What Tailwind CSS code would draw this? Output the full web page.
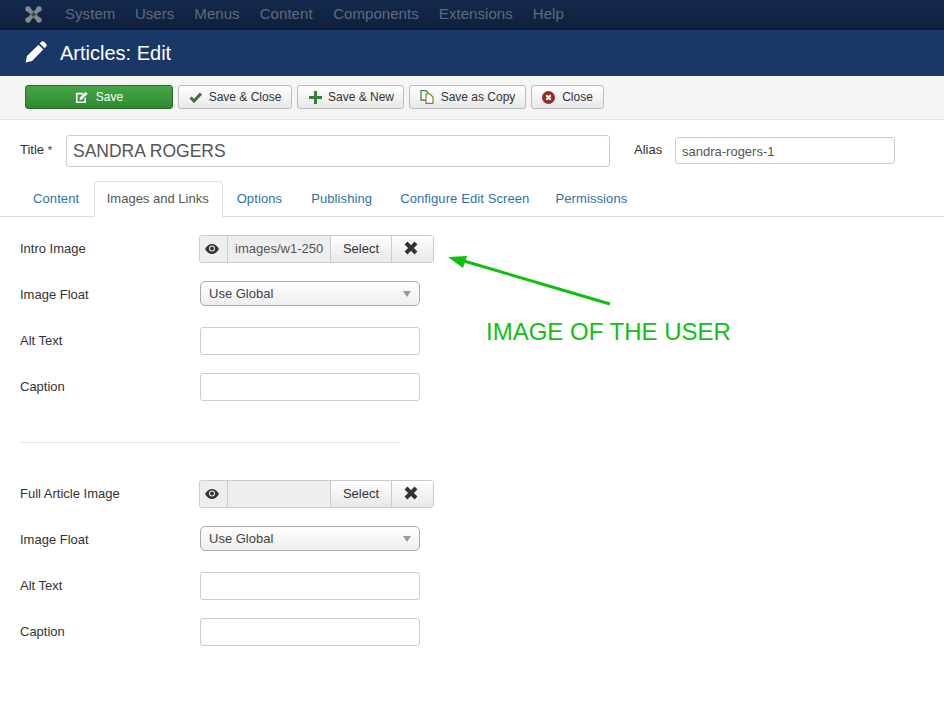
<!DOCTYPE html>
<html>
<head>
<meta charset="utf-8">
<script src="https://cdn.jsdelivr.net/npm/@tailwindcss/browser@4"></script>
</head>
<body class="relative w-[944px] h-[722px] overflow-hidden bg-white font-['Liberation_Sans',Arial,sans-serif] text-[13px] text-[#333]">

<!-- top nav -->
<nav class="h-[30px] bg-gradient-to-b from-[#13294d] to-[#10203b] border-b border-[#0c1a30] flex items-center pl-[25px] text-[15px] text-[#5d6b80] tracking-[0.06px]">
    <svg class="w-[17px] h-[17px] mr-[23px]" viewBox="0 0 18 18" fill="#84898f">
        <path d="M3.500 3.500L14.500 14.500M14.500 3.500L3.500 14.500" stroke="#84898f" stroke-width="4.500" fill="none"/>
        <circle cx="3.200" cy="3.200" r="2.900"/><circle cx="14.800" cy="3.200" r="2.900"/>
        <circle cx="3.200" cy="14.800" r="2.900"/><circle cx="14.800" cy="14.800" r="2.900"/>
        <path d="M9 6.200L11.800 9 9 11.800 6.200 9z" fill="#3c4a5e"/>
    </svg>
    <div class="flex gap-[20px]">
        <span>System</span><span class="-ml-[0.500px]">Users</span><span>Menus</span><span>Content</span><span class="ml-[0.500px]">Components</span><span>Extensions</span><span>Help</span>
    </div>
</nav>

<!-- page title -->
<header class="h-[46px] bg-[#1a3867] flex items-center pl-[25px] text-white">
    <svg class="w-[22px] h-[22px] mr-[13px] -mt-[3px]" viewBox="0 0 22 22" fill="#fff">
        <path d="M16.500.8a2 2 0 0 1 2.500 0l2.200 2.200a2 2 0 0 1 0 2.500L19.500 7.300 14.700 2.500z"/>
        <path d="M13.500 3.700l4.800 4.800L7 20 .6 21.400 2 15z"/>
    </svg>
    <h1 class="text-[20px] leading-none">Articles: Edit</h1>
</header>

<!-- toolbar -->
<div class="h-[44px] bg-[#f5f5f5] border-b border-[#e3e3e3] flex items-start pt-[9px] pl-[25px] gap-[5px] text-[12px]">
    <button class="w-[148px] h-[24px] rounded-[3px] border border-[#2b6a2b] bg-gradient-to-b from-[#46a546] to-[#2f8a2f] text-white flex items-center justify-center gap-[8px]">
        <svg class="w-[13px] h-[13px]" viewBox="0 0 14 14" fill="#fff">
            <path d="M1 2h8.500L8 3.800H2.800v7.400H10V8.500l1.800-1.800V13H1z"/>
            <path d="M11.500 .8L13.700 3 7.500 9.200 4.800 9.800 5.300 7z"/>
        </svg>
        Save
    </button>
    <button class="w-[114px] h-[24px] rounded-[3px] border border-[#bbb] bg-gradient-to-b from-white to-[#e8e8e8] flex items-center justify-center gap-[7px]">
        <svg class="w-[13px] h-[11px]" viewBox="0 0 13 11" fill="none" stroke="#3c763d" stroke-width="3"><path d="M1.500 5.500l3.500 3.500 7-7.500"/></svg>
        Save &amp; Close
    </button>
    <button class="w-[107px] h-[24px] pl-[2px] rounded-[3px] border border-[#bbb] bg-gradient-to-b from-white to-[#e8e8e8] flex items-center justify-center gap-[6px]">
        <svg class="w-[13px] h-[13px]" viewBox="0 0 13 13" fill="#378137"><path d="M5 0h3v5h5v3H8v5H5V8H0V5h5z"/></svg>
        Save &amp; New
    </button>
    <button class="w-[117px] h-[24px] rounded-[3px] border border-[#bbb] bg-gradient-to-b from-white to-[#e8e8e8] flex items-center justify-center gap-[7px]">
        <svg class="w-[14px] h-[14px]" viewBox="0 0 14 14" fill="#fff" stroke-width="1.200">
            <path d="M1 .6h5l2 2v7.500H1z" stroke="#378137"/>
            <path d="M6 4h4l3 3v6.400H6z" stroke="#8a7a2e"/>
        </svg>
        Save as Copy
    </button>
    <button class="w-[73px] h-[24px] rounded-[3px] border border-[#bbb] bg-gradient-to-b from-white to-[#e8e8e8] flex items-center justify-center gap-[7px]">
        <svg class="w-[13px] h-[13px]" viewBox="0 0 13 13">
            <circle cx="6.500" cy="6.500" r="6.500" fill="#962d22"/>
            <path d="M4.300 4.300l4.400 4.400M8.700 4.300l-4.400 4.400" stroke="#fff" stroke-width="2"/>
        </svg>
        Close
    </button>
</div>

<!-- title row -->
<div class="flex items-center pl-[20px] pt-[15px] h-[47px]">
    <label class="w-[46px] -mt-[2px]">Title <span class="text-[11px]">*</span></label>
    <input class="w-[544px] h-[32px] border border-[#ccc] rounded-[3px] px-[6px] text-[17.500px] text-[#555]" value="SANDRA ROGERS">
    <label class="ml-[24px] w-[41px] -mt-[2px]">Alias</label>
    <input class="w-[220px] h-[27px] -mt-[1px] border border-[#ccc] rounded-[3px] px-[6px] pt-[2px] text-[#555]" value="sandra-rogers-1">
</div>

<!-- tabs -->
<div class="flex items-end h-[35px] mt-[15px] pl-[20px] border-b border-[#ddd] text-[#3071a9] tracking-[0.1px]">
    <a class="pl-[13px] pr-[14.500px] h-[35px] leading-[35px]">Content</a>
    <a class="pl-[12px] pr-[13px] h-[36px] leading-[34px] -mb-px bg-white border border-[#ddd] border-b-white rounded-t-[4px] text-[#555] tracking-normal">Images and Links</a>
    <a class="pl-[14px] pr-[15px] h-[35px] leading-[35px]">Options</a>
    <a class="px-[14px] h-[35px] leading-[35px]">Publishing</a>
    <a class="pl-[14px] pr-[12px] h-[35px] leading-[35px]">Configure Edit Screen</a>
    <a class="px-[14px] h-[35px] leading-[35px]">Permissions</a>
</div>

<!-- images form -->
<div class="pl-[20px] pt-[18px]">
    <div class="flex items-center h-[28px]">
        <label class="w-[179px]">Intro Image</label>
        <div class="flex h-[28px] w-[235px] border border-[#ccc] rounded-[3px] overflow-hidden">
            <span class="w-[28px] bg-[#eee] border-r border-[#ccc] flex items-center justify-center pr-[3px] pb-[1px]">
                <svg class="w-[14px] h-[10px]" viewBox="0 0 14 10"><path d="M0 5c2-3.300 4.300-5 7-5s5 1.700 7 5c-2 3.300-4.300 5-7 5S2 8.300 0 5z" fill="#333"/><circle cx="7" cy="4.600" r="3" fill="#eee"/><circle cx="7" cy="4.600" r="2" fill="#333"/></svg>
            </span>
            <span class="w-[102px] bg-[#eee] pl-[7px] leading-[26px] text-[#555] overflow-hidden whitespace-nowrap">images/w1-250</span>
            <span class="w-[61px] border-l border-[#ccc] bg-gradient-to-b from-white to-[#e8e8e8] text-center leading-[26px]">Select</span>
            <span class="flex-1 border-l border-[#ccc] bg-gradient-to-b from-white to-[#e8e8e8] flex items-center justify-center pr-[3px] pb-[2px]">
                <svg class="w-[14px] h-[14px]" viewBox="0 0 14 14" stroke="#333" stroke-width="4"><path d="M2 2l10 10M12 2L2 12"/></svg>
            </span>
        </div>
    </div>
    <div class="flex items-center h-[26px] mt-[17px]">
        <label class="w-[180px] pt-[3px]">Image Float</label>
        <div class="w-[220px] h-[25px] border border-[#aaa] rounded-[5px] bg-gradient-to-b from-white to-[#eee] flex items-center justify-between pl-[8px] pr-[8px] pt-[1px] text-[#444]">
            Use Global
            <span class="w-0 h-0 border-x-[4px] border-x-transparent border-t-[6px] border-t-[#999]"></span>
        </div>
    </div>
    <div class="flex items-center h-[28px] mt-[21px]">
        <label class="w-[180px]">Alt Text</label>
        <input class="w-[220px] h-[28px] border border-[#ccc] rounded-[3px]">
    </div>
    <div class="flex items-center h-[28px] mt-[18px]">
        <label class="w-[180px]">Caption</label>
        <input class="w-[220px] h-[28px] border border-[#ccc] rounded-[3px]">
    </div>

    <hr class="w-[380px] border-[#e5e5e5] mt-[41px] mb-[37px]">

    <div class="flex items-center h-[28px]">
        <label class="w-[179px]">Full Article Image</label>
        <div class="flex h-[28px] w-[235px] border border-[#ccc] rounded-[3px] overflow-hidden">
            <span class="w-[28px] bg-[#eee] border-r border-[#ccc] flex items-center justify-center pr-[3px] pb-[1px]">
                <svg class="w-[14px] h-[10px]" viewBox="0 0 14 10"><path d="M0 5c2-3.300 4.300-5 7-5s5 1.700 7 5c-2 3.300-4.300 5-7 5S2 8.300 0 5z" fill="#333"/><circle cx="7" cy="4.600" r="3" fill="#eee"/><circle cx="7" cy="4.600" r="2" fill="#333"/></svg>
            </span>
            <span class="w-[102px] bg-[#eee]"></span>
            <span class="w-[61px] border-l border-[#ccc] bg-gradient-to-b from-white to-[#e8e8e8] text-center leading-[26px]">Select</span>
            <span class="flex-1 border-l border-[#ccc] bg-gradient-to-b from-white to-[#e8e8e8] flex items-center justify-center pr-[3px] pb-[2px]">
                <svg class="w-[14px] h-[14px]" viewBox="0 0 14 14" stroke="#333" stroke-width="4"><path d="M2 2l10 10M12 2L2 12"/></svg>
            </span>
        </div>
    </div>
    <div class="flex items-center h-[26px] mt-[17px]">
        <label class="w-[180px] pt-[3px]">Image Float</label>
        <div class="w-[220px] h-[25px] border border-[#aaa] rounded-[5px] bg-gradient-to-b from-white to-[#eee] flex items-center justify-between pl-[8px] pr-[8px] pt-[1px] text-[#444]">
            Use Global
            <span class="w-0 h-0 border-x-[4px] border-x-transparent border-t-[6px] border-t-[#999]"></span>
        </div>
    </div>
    <div class="flex items-center h-[28px] mt-[21px]">
        <label class="w-[180px]">Alt Text</label>
        <input class="w-[220px] h-[28px] border border-[#ccc] rounded-[3px]">
    </div>
    <div class="flex items-center h-[28px] mt-[18px]">
        <label class="w-[180px]">Caption</label>
        <input class="w-[220px] h-[28px] border border-[#ccc] rounded-[3px]">
    </div>
</div>

<!-- annotation drawn over the page -->
<svg class="absolute left-[440px] top-[245px]" width="180" height="70" viewBox="0 0 180 70">
    <path d="M170 59L24 16" stroke="#0cc00c" stroke-width="3" fill="none"/>
    <path d="M8 12L27 11 23 23z" fill="#0cc00c"/>
</svg>
<span class="absolute left-[486px] top-[318px] text-[24px] leading-[27px] text-[#12c012] whitespace-nowrap">IMAGE OF THE USER</span>

</body>
</html>
